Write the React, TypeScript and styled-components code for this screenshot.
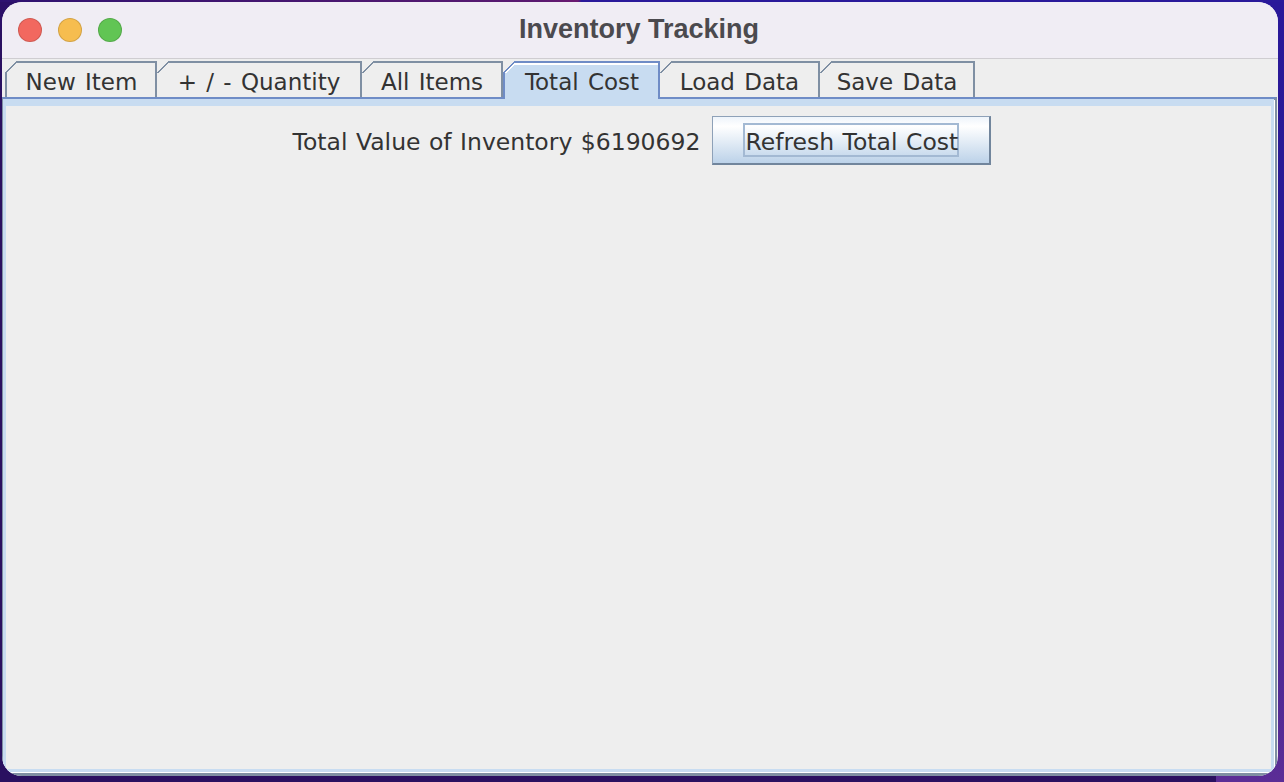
import styled, { createGlobalStyle } from "styled-components";

const tabs = ["New Item", "+ / - Quantity", "All Items", "Total Cost", "Load Data", "Save Data"];
const tabWidths = [152, 205, 141, 157, 160, 155];
const lights = ["#f2685f", "#f6bd4f", "#61c554"];

const GlobalStyle = createGlobalStyle`
  html, body {
    margin: 0;
    height: 100%;
  }
  body {
    overflow: hidden;
    font-family: "DejaVu Sans", sans-serif;
  }
`;

// wallpaper peeking out round the window
const Desktop = styled.div`
  width: 1284px;
  height: 782px;
  box-sizing: border-box;
  padding: 2px 6px 6px 2px;
  background:
    linear-gradient(90deg, #2e1270 0, #5a1a70 42%, #6b1a70 45%, #2a1a9a 45.3%) top / 100% 2px no-repeat,
    linear-gradient(180deg, #2a189a 0, #2a1a92 40%, #5b2d96 100%) right / 30px 100% no-repeat,
    linear-gradient(90deg, #2c1068 50%, #2a189a 50%) top / 100% 30px no-repeat,
    linear-gradient(90deg, #2a1060 94.7%, #5b2d96 94.7%);
`;

const Window = styled.div`
  height: 100%;
  display: flex;
  flex-direction: column;
  border-radius: 20px;
  overflow: hidden;
  background: #eeeeee;
`;

const TitleBar = styled.header`
  flex: 0 0 56px;
  display: grid;
  grid-template-columns: 1fr auto 1fr;
  align-items: center;
  padding: 0 16px;
  background: #f0edf4;
  border-bottom: 1px solid #cfcdd1;
`;

const Lights = styled.div`
  display: flex;
  gap: 16px;
`;

const Light = styled.span<{ $color: string }>`
  width: 24px;
  height: 24px;
  box-sizing: border-box;
  border-radius: 50%;
  background: ${(p) => p.$color};
  border: 1px solid rgba(0, 0, 0, 0.14);
`;

const Title = styled.h1`
  margin: 0 2px 0 0;
  padding-bottom: 2px;
  font-family: "Liberation Sans", sans-serif;
  font-size: 27px;
  font-weight: 700;
  color: #4b4a4e;
`;

const TabStrip = styled.nav`
  display: flex;
  height: 38px;
  padding: 2px 0 0 3px;
  box-sizing: border-box;
  position: relative;
  z-index: 1;
`;

const Tab = styled.div<{ $active?: boolean; $width: number }>`
  position: relative;
  box-sizing: border-box;
  width: ${(p) => p.$width}px;
  height: 36px;
  padding: 4px 0 0 1px;
  text-align: center;
  font-size: 23px;
  line-height: 30px;
  word-spacing: 2px;
  color: #333333;
  background: ${(p) => (p.$active ? "#c8dcf1" : "#eeeeee")};
  border-top: 2px solid ${(p) => (p.$active ? "#6f8cc6" : "#7f8fa3")};
  border-right: 2px solid ${(p) => (p.$active ? "#6f8cc6" : "#7f8fa3")};
  border-left: ${(p) => (p.$active ? "2px solid #6f8cc6" : "0")};
  ${(p) => (p.$active ? "box-shadow: inset 0 2px 0 #ffffff;" : "")}

  &:first-child {
    border-left: 2px solid #7f8fa3;
  }

  /* cut top-left corner */
  &::before {
    content: "";
    position: absolute;
    top: -2px;
    left: ${(p) => (p.$active ? "-2px" : "0")};
    width: 12px;
    height: 12px;
    background: linear-gradient(
      135deg,
      #eeeeee 0 46%,
      ${(p) => (p.$active ? "#6f8cc6" : "#7f8fa3")} 46% 56%,
      ${(p) => (p.$active ? "#ffffff 56% 66%," : "")}
      transparent ${(p) => (p.$active ? "66%" : "56%")}
    );
  }

  &:first-child::before {
    left: -2px;
  }

  /* the selected tab runs on into the frame band */
  ${(p) =>
    p.$active
      ? `&::after {
    content: "";
    position: absolute;
    top: 34px;
    left: 0;
    right: 0;
    height: 8px;
    background: #c8dcf1;
  }`
      : ""}
`;

const ContentFrame = styled.main`
  flex: 1;
  display: flex;
  box-sizing: border-box;
  margin-right: 1px;
  border-top: 2px solid #6f8cc6;
  border-left: 1px solid #7f8fa3;
  border-right: 3px solid #7f8fa3;
  border-bottom: 4px solid #7f8fa3;
`;

const ContentInner = styled.div`
  flex: 1;
  display: flex;
  justify-content: center;
  align-items: flex-start;
  gap: 12px;
  padding: 10px 0 0 7px;
  border: solid #c8dcf1;
  border-width: 7px 3px 3px 3px;
  background: #eeeeee;
  box-shadow: 1px 1px 0 #ffffff;
`;

const Label = styled.span`
  font-size: 23.5px;
  line-height: 53px;
  word-spacing: 1px;
  color: #333333;
`;

const Button = styled.button`
  width: 279px;
  height: 49px;
  padding: 0;
  display: flex;
  align-items: center;
  justify-content: center;
  box-sizing: border-box;
  border: 1px solid #8ea1b8;
  border-right: 2px solid #71859c;
  border-bottom: 2px solid #71859c;
  background: linear-gradient(180deg, #eef4fb 0%, #ffffff 20%, #bcd2e9 100%);
  font: inherit;
`;

const Focus = styled.span`
  box-sizing: border-box;
  width: 216px;
  height: 34px;
  border: 2px solid #a3b9d3;
  font-size: 23.5px;
  line-height: 34px;
  word-spacing: 1px;
  white-space: nowrap;
  text-align: left;
  color: #333333;
`;

export default function App() {
  return (
    <Desktop>
      <GlobalStyle />
      <Window>
        <TitleBar>
          <Lights>
            {lights.map((c) => (
              <Light key={c} $color={c} />
            ))}
          </Lights>
          <Title>Inventory Tracking</Title>
          <span />
        </TitleBar>
        <TabStrip>
          {tabs.map((t, i) => (
            <Tab key={t} $width={tabWidths[i]} $active={t === "Total Cost"}>
              {t}
            </Tab>
          ))}
        </TabStrip>
        <ContentFrame>
          <ContentInner>
            <Label>Total Value of Inventory $6190692</Label>
            <Button>
              <Focus>Refresh Total Cost</Focus>
            </Button>
          </ContentInner>
        </ContentFrame>
      </Window>
    </Desktop>
  );
}
